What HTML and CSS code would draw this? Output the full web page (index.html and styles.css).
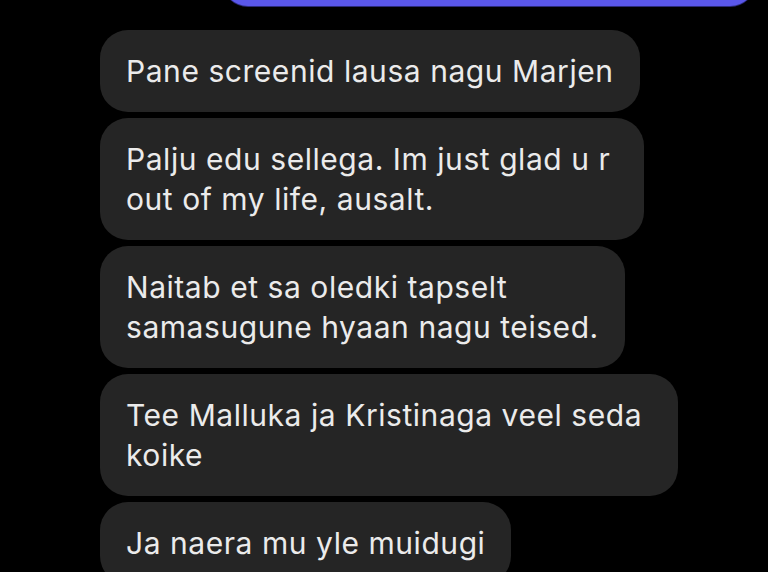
FILE: index.html
```html
<!DOCTYPE html>
<html lang="et">
<head>
<meta charset="utf-8">
<title>Chat</title>
<link rel="stylesheet" href="styles.css">
</head>
<body>
<main class="thread">
  <div class="bubble-out"></div>
  <div class="bubble">Pane screenid lausa nagu Marjen</div>
  <div class="bubble wrap-b2">Palju edu sellega. Im just glad u r<br>out of my life, ausalt.</div>
  <div class="bubble">Naitab et sa oledki tapselt<br>samasugune hyaan nagu teised.</div>
  <div class="bubble wrap-b4">Tee Malluka ja Kristinaga veel seda<br>koike</div>
  <div class="bubble">Ja naera mu yle muidugi</div>
</main>
</body>
</html>
```
FILE: styles.css
```css
html, body {
  margin: 0;
  padding: 0;
  background: #000;
  height: 100%;
  overflow: hidden;
}
.thread {
  display: flex;
  flex-direction: column;
  align-items: flex-start;
  gap: 6px;
  padding: 0 0 0 100px;
  font-family: Inter, "Liberation Sans", sans-serif;
}
.bubble-out {
  align-self: flex-end;
  width: 534px;
  height: 40px;
  margin: -34px 12px 18px 0;
  background: #5a57ea;
  border-radius: 0 0 26px 26px;
  box-shadow: 0 1px 0 #2b2a7a;
}
.bubble {
  background: #252525;
  color: #ebebeb;
  font-size: 30px;
  letter-spacing: 0.55px;
  line-height: 40px;
  padding: 21px 26px 21px 26px;
  border-radius: 28px;
  white-space: nowrap;
}
.wrap-b2 {
  padding-right: 34px;
}
.wrap-b4 {
  padding-right: 36px;
}
```
